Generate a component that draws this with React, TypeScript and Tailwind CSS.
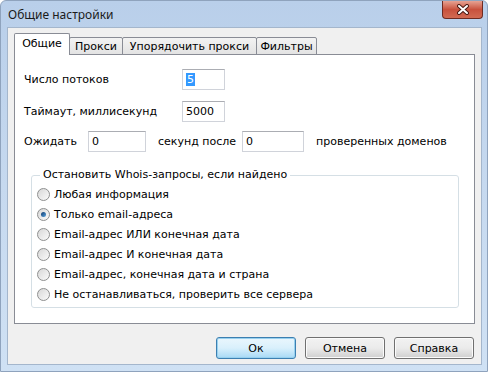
import type { ReactNode } from 'react';

const OPTIONS = [
  'Любая информация',
  'Только email-адреса',
  'Email-адрес ИЛИ конечная дата',
  'Email-адрес И конечная дата',
  'Email-адрес, конечная дата и страна',
  'Не останавливаться, проверить все сервера',
];

function TextBox({ w, children }: { w: string; children: ReactNode }) {
  return (
    <div className={`${w} h-[21px] flex items-center pl-[3px] bg-white border border-[#d0d3da] border-t-[#abadb3]`}>
      {children}
    </div>
  );
}

function Radio({ checked }: { checked?: boolean }) {
  return (
    <div className="w-[13px] h-[13px] rounded-full border border-[#8e8f8f] bg-gradient-to-br from-[#d8d8d8] to-[#fbfbfb] flex items-center justify-center">
      {checked && <div className="w-[5px] h-[5px] rounded-full bg-gradient-to-br from-[#0d3b6e] to-[#5aa4e0]" />}
    </div>
  );
}

function Btn({ label, primary }: { label: string; primary?: boolean }) {
  return (
    <div
      className={
        primary
          ? 'w-[80px] h-[22px] rounded-[3px] border border-[#3c7fb1] bg-gradient-to-b from-[#eaf6fd] via-[#d9f0fc] to-[#a7d9f5] flex items-center justify-center shadow-[inset_0_0_0_1px_#98d1ef]'
          : 'w-[80px] h-[22px] rounded-[3px] border border-[#707070] bg-gradient-to-b from-[#f2f2f2] via-[#ebebeb] to-[#cfcfcf] flex items-center justify-center shadow-[inset_0_0_0_1px_#fbfbfb]'
      }
    >
      {label}
    </div>
  );
}

export default function App() {
  return (
    <div className="w-[488px] h-[372px] relative bg-gradient-to-b from-[#b9cfea] via-[#c6d9ef] to-[#cfe1f4] border border-[#8fa3bd] rounded-t-[6px] overflow-hidden font-['DejaVu_Sans',Verdana,sans-serif] text-[11px] leading-[13px] text-black">
      {/* title bar */}
      <div className="h-[26px] flex items-center pl-[7px] pt-[1px] font-['Noto_Sans',sans-serif] text-[12px] text-[#1b1b1b]">
        Общие настройки
      </div>
      <div className="absolute top-0 right-[4px] w-[41px] h-[18px] rounded-b-[4px] border border-t-0 border-[#6e2b22] bg-gradient-to-b from-[#e6a293] via-[#c8513d] to-[#d26a52] flex items-center justify-center">
        <svg width="14" height="11" viewBox="0 0 14 11">
          <path d="M3 2 L11 9 M11 2 L3 9" stroke="#4a1a14" strokeWidth="4" strokeLinecap="round" />
          <path d="M3 2 L11 9 M11 2 L3 9" stroke="#ffffff" strokeWidth="2" strokeLinecap="round" />
        </svg>
      </div>

      {/* client area */}
      <div className="ml-[6px] w-[475px] h-[338px] border border-[#a4b6cc] bg-[#f0f0f0]">
        {/* tabs */}
        <div className="mt-[5px] ml-[6px] h-[22px] -mb-px relative z-10 flex items-end">
          <div className="w-[56px] h-[22px] border border-b-0 border-[#898c95] bg-white rounded-t-[2px] flex items-center justify-center pb-[2px]">
            Общие
          </div>
          <div className="-ml-px w-[54px] h-[18px] border border-[#898c95] bg-gradient-to-b from-[#f3f3f3] to-[#e3e3e3] rounded-t-[2px] flex items-center justify-center">
            Прокси
          </div>
          <div className="-ml-px w-[135px] h-[18px] border border-[#898c95] bg-gradient-to-b from-[#f3f3f3] to-[#e3e3e3] rounded-t-[2px] flex items-center justify-center">
            Упорядочить прокси
          </div>
          <div className="-ml-px w-[61px] h-[18px] border border-[#898c95] bg-gradient-to-b from-[#f3f3f3] to-[#e3e3e3] rounded-t-[2px] flex items-center justify-center">
            Фильтры
          </div>
        </div>

        {/* panel */}
        <div className="ml-[6px] w-[461px] h-[270px] border border-[#898c95] bg-white pl-[9px]">
          <div className="mt-[14px] h-[21px] flex items-center">
            <span className="w-[158px]">Число потоков</span>
            <TextBox w="w-[43px]">
              <span className="bg-[#3399ff] text-white px-px">5</span>
            </TextBox>
          </div>
          <div className="mt-[11px] h-[21px] flex items-center">
            <span className="w-[158px]">Таймаут, миллисекунд</span>
            <TextBox w="w-[43px]">5000</TextBox>
          </div>
          <div className="mt-[9px] h-[21px] flex items-center">
            <span className="w-[64px]">Ожидать</span>
            <TextBox w="w-[58px]">0</TextBox>
            <span className="w-[96px] pl-[12px]">секунд после</span>
            <TextBox w="w-[62px]">0</TextBox>
            <span className="pl-[12px]">проверенных доменов</span>
          </div>

          <fieldset className="mt-[16px] ml-[7px] w-[428px] h-[140px] border border-[#d5dfe5] rounded-[3px]">
            <legend className="ml-[8px] px-[3px] leading-[14px]">Остановить Whois-запросы, если найдено</legend>
            <div className="pt-[2px] pl-[5px] flex flex-col">
              {OPTIONS.map((o, i) => (
                <div key={o} className="h-[20px] flex items-center gap-[4px]">
                  <Radio checked={i === 1} />
                  <span>{o}</span>
                </div>
              ))}
            </div>
          </fieldset>
        </div>

        {/* buttons */}
        <div className="mt-[13px] pr-[7px] flex justify-end gap-[9px]">
          <Btn label="Ок" primary />
          <Btn label="Отмена" />
          <Btn label="Справка" />
        </div>
      </div>
    </div>
  );
}
